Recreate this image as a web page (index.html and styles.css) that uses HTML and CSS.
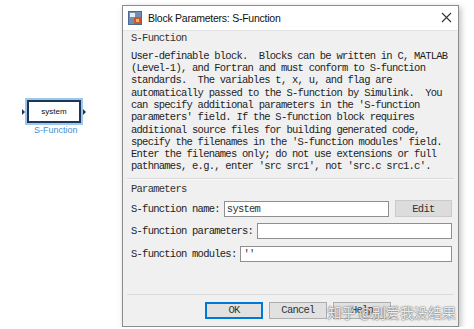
FILE: index.html
```html
<!DOCTYPE html>
<html lang="en">
<head>
    <meta charset="UTF-8">
    <meta name="viewport" content="width=device-width, initial-scale=1.0">
    <title>Block Parameters: S-Function</title>
    <link rel="stylesheet" href="styles.css">
</head>
<body>
    <div class="desk">
        <!-- Simulink canvas with the selected block -->
        <div class="canvas">
            <div class="block-wrap">
                <span class="port port-in"></span>
                <div class="block">system</div>
                <span class="port port-out"></span>
            </div>
            <div class="block-name">S-Function</div>
        </div>

        <div class="dialog">
            <div class="titlebar">
                <svg class="title-icon" width="14" height="14" viewBox="0 0 14 14">
                    <rect x="0.5" y="0.5" width="13" height="13" fill="#6f8fb3" stroke="#4a6a90"/>
                    <rect x="2" y="2" width="5" height="4" fill="#e8eef5"/>
                    <rect x="6" y="6" width="7" height="7" fill="#c9582c"/>
                    <rect x="8" y="8" width="3" height="3" fill="#f3b27a"/>
                </svg>
                <span class="title-text">Block Parameters: S-Function</span>
                <svg class="close" width="11" height="11" viewBox="0 0 11 11">
                    <path d="M1 1 L10 10 M10 1 L1 10" stroke="#333" stroke-width="1.1"/>
                </svg>
            </div>

            <div class="content">
                <div class="group group-desc">
                    <div class="legend">S-Function</div>
<p class="desc">User-definable block.  Blocks can be written in C, MATLAB
(Level-1), and Fortran and must conform to S-function
standards.  The variables t, x, u, and flag are
automatically passed to the S-function by Simulink.  You
can specify additional parameters in the 'S-function
parameters' field. If the S-function block requires
additional source files for building generated code,
specify the filenames in the 'S-function modules' field.
Enter the filenames only; do not use extensions or full
pathnames, e.g., enter 'src src1', not 'src.c src1.c'.</p>
                </div>

                <div class="group group-params">
                    <div class="legend">Parameters</div>
                    <div class="rows">
                        <div class="row">
                            <span class="label">S-function name:</span>
                            <div class="field field-name">system</div>
                            <button class="btn btn-edit">Edit</button>
                        </div>
                        <div class="row">
                            <span class="label">S-function parameters:</span>
                            <div class="field"></div>
                        </div>
                        <div class="row">
                            <span class="label">S-function modules:</span>
                            <div class="field">''</div>
                        </div>
                    </div>
                </div>
            </div>

            <div class="buttons">
                <button class="btn btn-main btn-ok">OK</button>
                <button class="btn btn-main">Cancel</button>
                <button class="btn btn-main">Help</button>
            </div>

            <div class="watermark">知乎 @别爱我没结果</div>
        </div>
    </div>
</body>
</html>
```

FILE: styles.css
```css
body {
    margin: 0;
    padding: 0;
    background: #fff;
    font-family: "Liberation Mono", monospace;
    color: #222;
}

.desk {
    display: flex;
    padding-top: 5px;
}

/* ---- canvas ---- */
.canvas {
    width: 122px;
    padding-top: 95px;
}

.block-wrap {
    display: flex;
    align-items: center;
    margin-left: 22px;
}

.block {
    width: 50px;
    height: 19px;
    border: 2px solid #1d3557;
    outline: 2px solid #9cc8ee;
    background: #fff;
    font-family: "Liberation Sans", Arial, sans-serif;
    font-size: 8px;
    display: flex;
    align-items: center;
    justify-content: center;
    color: #111;
    margin: 0 2px;
}

.port {
    width: 0;
    height: 0;
    border-top: 3px solid transparent;
    border-bottom: 3px solid transparent;
    border-left: 3px solid #1d3557;
}

.block-name {
    margin-left: 34px;
    margin-top: 2px;
    font-family: "Liberation Sans", Arial, sans-serif;
    font-size: 9px;
    color: #3b8fd4;
}

/* ---- dialog ---- */
.dialog {
    position: relative;
    width: 335px;
    height: 320px;
    border: 1px solid #8c8c8c;
    background: #f0f0f0;
    box-shadow: 2px 2px 6px rgba(0, 0, 0, 0.25);
    display: flex;
    flex-direction: column;
}

.titlebar {
    height: 25px;
    background: #fff;
    display: flex;
    align-items: center;
    padding: 0 6px 0 5px;
    border-bottom: 1px solid #e4e4e4;
}

.title-icon {
    margin-right: 6px;
}

.title-text {
    flex: 1;
    font-family: "Liberation Sans", Arial, sans-serif;
    font-size: 10.5px;
    letter-spacing: -0.25px;
    color: #111;
}

.content {
    flex: 1;
    padding: 0 4px;
}

.group {
    border-bottom: 1px solid #dadada;
}

.legend {
    font-size: 10.5px;
    letter-spacing: -0.75px;
    line-height: 12px;
    padding: 1px 0 0 4px;
    color: #333;
}

.desc {
    margin: 6px 0 5px 4px;
    white-space: pre;
    font-size: 10.5px;
    letter-spacing: -0.75px;
    line-height: 12.3px;
    color: #1e1e1e;
}

.group-params {
    height: 112px;
    border-top: 1px solid #fafafa;
    padding-top: 2px;
}

.rows {
    display: flex;
    flex-direction: column;
    gap: 6.5px;
    margin-top: 6px;
    padding-left: 4px;
    padding-right: 2px;
}

.row {
    display: flex;
    align-items: center;
    height: 16px;
}

.label {
    font-size: 10.5px;
    letter-spacing: -0.75px;
    margin-right: 4px;
    white-space: pre;
}

.field {
    flex: 1;
    height: 14px;
    border: 1px solid #8f8f8f;
    background: #fff;
    font-size: 10.5px;
    letter-spacing: -0.75px;
    line-height: 14px;
    padding-left: 2px;
    color: #333;
}

.field-name {
    flex: none;
    width: 161px;
}

.btn {
    font-family: "Liberation Mono", monospace;
    font-size: 10.5px;
    letter-spacing: -0.75px;
    color: #333;
    padding: 0;
}

.btn-edit {
    margin-left: 6px;
    width: 60px;
    height: 17px;
    background: #dcdcdc;
    border: 1px solid #cacaca;
}

.buttons {
    height: 33px;
    display: flex;
    align-items: center;
    gap: 6px;
    padding-left: 82px;
}

.btn-main {
    width: 58px;
    height: 17px;
    background: #e1e1e1;
    border: 1px solid #adadad;
}

.btn-ok {
    border: 1px solid #0078d7;
    box-shadow: inset 0 0 0 1px #0078d7;
}

.watermark {
    position: absolute;
    right: 2px;
    bottom: 4px;
    font-family: "Noto Sans CJK SC", sans-serif;
    font-size: 14px;
    color: rgba(255, 255, 255, 0.9);
    text-shadow: 0 0 1px #555, 0 0 2px #777;
    white-space: nowrap;
}
```
